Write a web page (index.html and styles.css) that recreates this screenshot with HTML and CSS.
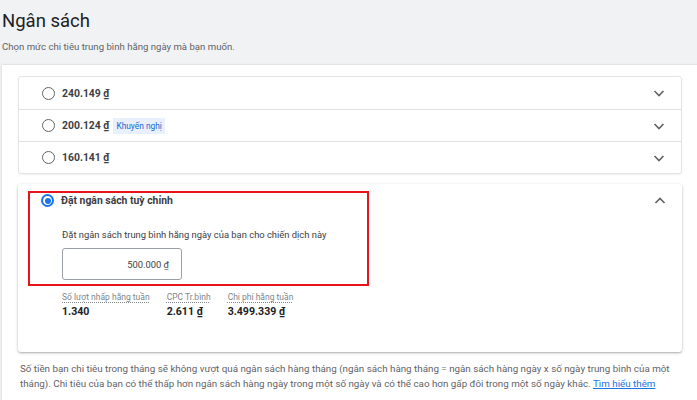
FILE: index.html
```html
<!DOCTYPE html>
<html lang="vi">
<head>
<meta charset="utf-8">
<title>Ngân sách</title>
<link rel="stylesheet" href="styles.css">
</head>
<body>
<div class="page">
  <header class="head">
    <h1 class="title">Ngân sách</h1>
    <p class="subtitle">Chọn mức chi tiêu trung bình hằng ngày mà bạn muốn.</p>
  </header>
  <section class="panel">
    <div class="group">
      <div class="row">
        <span class="radio"></span>
        <span class="amount">240.149 ₫</span>
        <svg class="chev" viewBox="0 0 16 16"><path d="M3.5 6 L8 10.5 L12.5 6" /></svg>
      </div>
      <div class="row">
        <span class="radio"></span>
        <span class="amount">200.124 ₫</span>
        <span class="chip">Khuyến nghị</span>
        <svg class="chev" viewBox="0 0 16 16"><path d="M3.5 6 L8 10.5 L12.5 6" /></svg>
      </div>
      <div class="row">
        <span class="radio"></span>
        <span class="amount">160.141 ₫</span>
        <svg class="chev" viewBox="0 0 16 16"><path d="M3.5 6 L8 10.5 L12.5 6" /></svg>
      </div>
    </div>

    <div class="card">
      <div class="row row-open">
        <span class="radio radio-on"></span>
        <span class="amount">Đặt ngân sách tuỳ chỉnh</span>
        <svg class="chev" viewBox="0 0 16 16"><path d="M3.5 10 L8 5.5 L12.5 10" /></svg>
      </div>
      <div class="body">
        <p class="label">Đặt ngân sách trung bình hằng ngày của bạn cho chiến dịch này</p>
        <div class="input">500.000 ₫</div>
        <div class="stats">
          <div class="stat">
            <span class="stat-label">Số lượt nhấp hằng tuần</span>
            <span class="stat-value">1.340</span>
          </div>
          <div class="stat">
            <span class="stat-label">CPC Tr.bình</span>
            <span class="stat-value">2.611 ₫</span>
          </div>
          <div class="stat">
            <span class="stat-label">Chi phí hằng tuần</span>
            <span class="stat-value">3.499.339 ₫</span>
          </div>
        </div>
      </div>
      <div class="highlight"></div>
    </div>

    <p class="note">Số tiền bạn chi tiêu trong tháng sẽ không vượt quá ngân sách hàng tháng (ngân sách hàng tháng = ngân sách hàng ngày x số ngày trung bình của một tháng). Chi tiêu của bạn có thể thấp hơn ngân sách hàng ngày trong một số ngày và có thể cao hơn gấp đôi trong một số ngày khác. <a href="#" class="link">Tìm hiểu thêm</a></p>
  </section>
</div>
</body>
</html>
```

FILE: styles.css
```css
* { box-sizing: border-box; }
html, body { margin: 0; padding: 0; }
body {
  background: #f1f2f4;
  font-family: Roboto, "Noto Sans", "Liberation Sans", sans-serif;
  color: #3c4043;
  width: 697px;
  height: 400px;
  overflow: hidden;
}
.page {
  display: flex;
  flex-direction: column;
  height: 400px;
}
.head {
  flex: none;
  padding: 9px 0 0 2px;
  height: 65px;
}
.title {
  margin: 0;
  font-size: 18.5px;
  font-weight: 400;
  line-height: 24px;
  color: #202124;
}
.subtitle {
  margin: 7px 0 0;
  font-size: 9.6px;
  line-height: 13px;
  color: #5f6368;
}
.panel {
  flex: 1;
  margin-left: 2px;
  margin-right: -4px;
  background: #fff;
  box-shadow: 0 0 2px rgba(0,0,0,0.18);
  padding: 11px 19px 0 16px;
}
.group {
  border: 1px solid #e3e4e6;
  border-radius: 3px;
  box-shadow: 0 1px 2px rgba(0,0,0,0.06);
}
.row {
  display: flex;
  align-items: center;
  height: 33px;
  padding: 0 14px 0 23px;
  gap: 7px;
}
.group .row + .row { border-top: 1px solid #dcdde0; }
.group .row { height: 32px; }
.radio {
  width: 13px;
  height: 13px;
  border-radius: 50%;
  border: 1.5px solid #5f6368;
  flex: none;
  display: flex;
  align-items: center;
  justify-content: center;
}
.radio-on { border: 2px solid #1a73e8; }
.radio-on::after {
  content: "";
  width: 6px;
  height: 6px;
  border-radius: 50%;
  background: #1a73e8;
}
.amount {
  font-size: 10.4px;
  font-weight: 700;
  color: #3c4043;
}
.chip {
  font-size: 8.4px;
  color: #1967d2;
  background: #e8f0fe;
  padding: 3px 3px;
  line-height: 10px;
  margin-left: -3px;
}
.chev {
  margin-left: auto;
  width: 16px;
  height: 16px;
  fill: none;
  stroke: #5f6368;
  stroke-width: 1.6;
}
.card {
  position: relative;
  margin-top: 10px;
  height: 168px;
  border-radius: 3px;
  background: #fff;
  box-shadow: 0 1px 3px rgba(0,0,0,0.28), 0 1px 1px rgba(0,0,0,0.08);
}
.body {
  padding: 10px 0 0 44px;
}
.label {
  margin: 0;
  font-size: 9.4px;
  line-height: 16px;
  color: #3c4043;
}
.input {
  margin-top: 5px;
  width: 120px;
  height: 32px;
  border: 1px solid #9aa0a6;
  border-radius: 3px;
  display: flex;
  align-items: center;
  justify-content: flex-end;
  padding-right: 12px;
  font-size: 9.4px;
  color: #3c4043;
}
.stats {
  display: flex;
  gap: 17px;
  margin-top: 11px;
}
.stat {
  display: flex;
  flex-direction: column;
}
.stat-label {
  font-size: 8.5px;
  line-height: 13px;
  color: #80868b;
  text-decoration: underline dotted;
  text-underline-offset: 2px;
}
.stat-value {
  font-size: 10.6px;
  line-height: 15px;
  font-weight: 700;
  color: #202124;
}
.highlight {
  position: absolute;
  left: 10px;
  top: 7px;
  width: 341px;
  height: 95px;
  border: 2px solid #e8141c;
  pointer-events: none;
}
.note {
  margin: 9px 0 0 2px;
  font-size: 9.8px;
  line-height: 15px;
  color: #5f6368;
}
.link {
  color: #1a73e8;
  text-decoration: underline;
}
```
